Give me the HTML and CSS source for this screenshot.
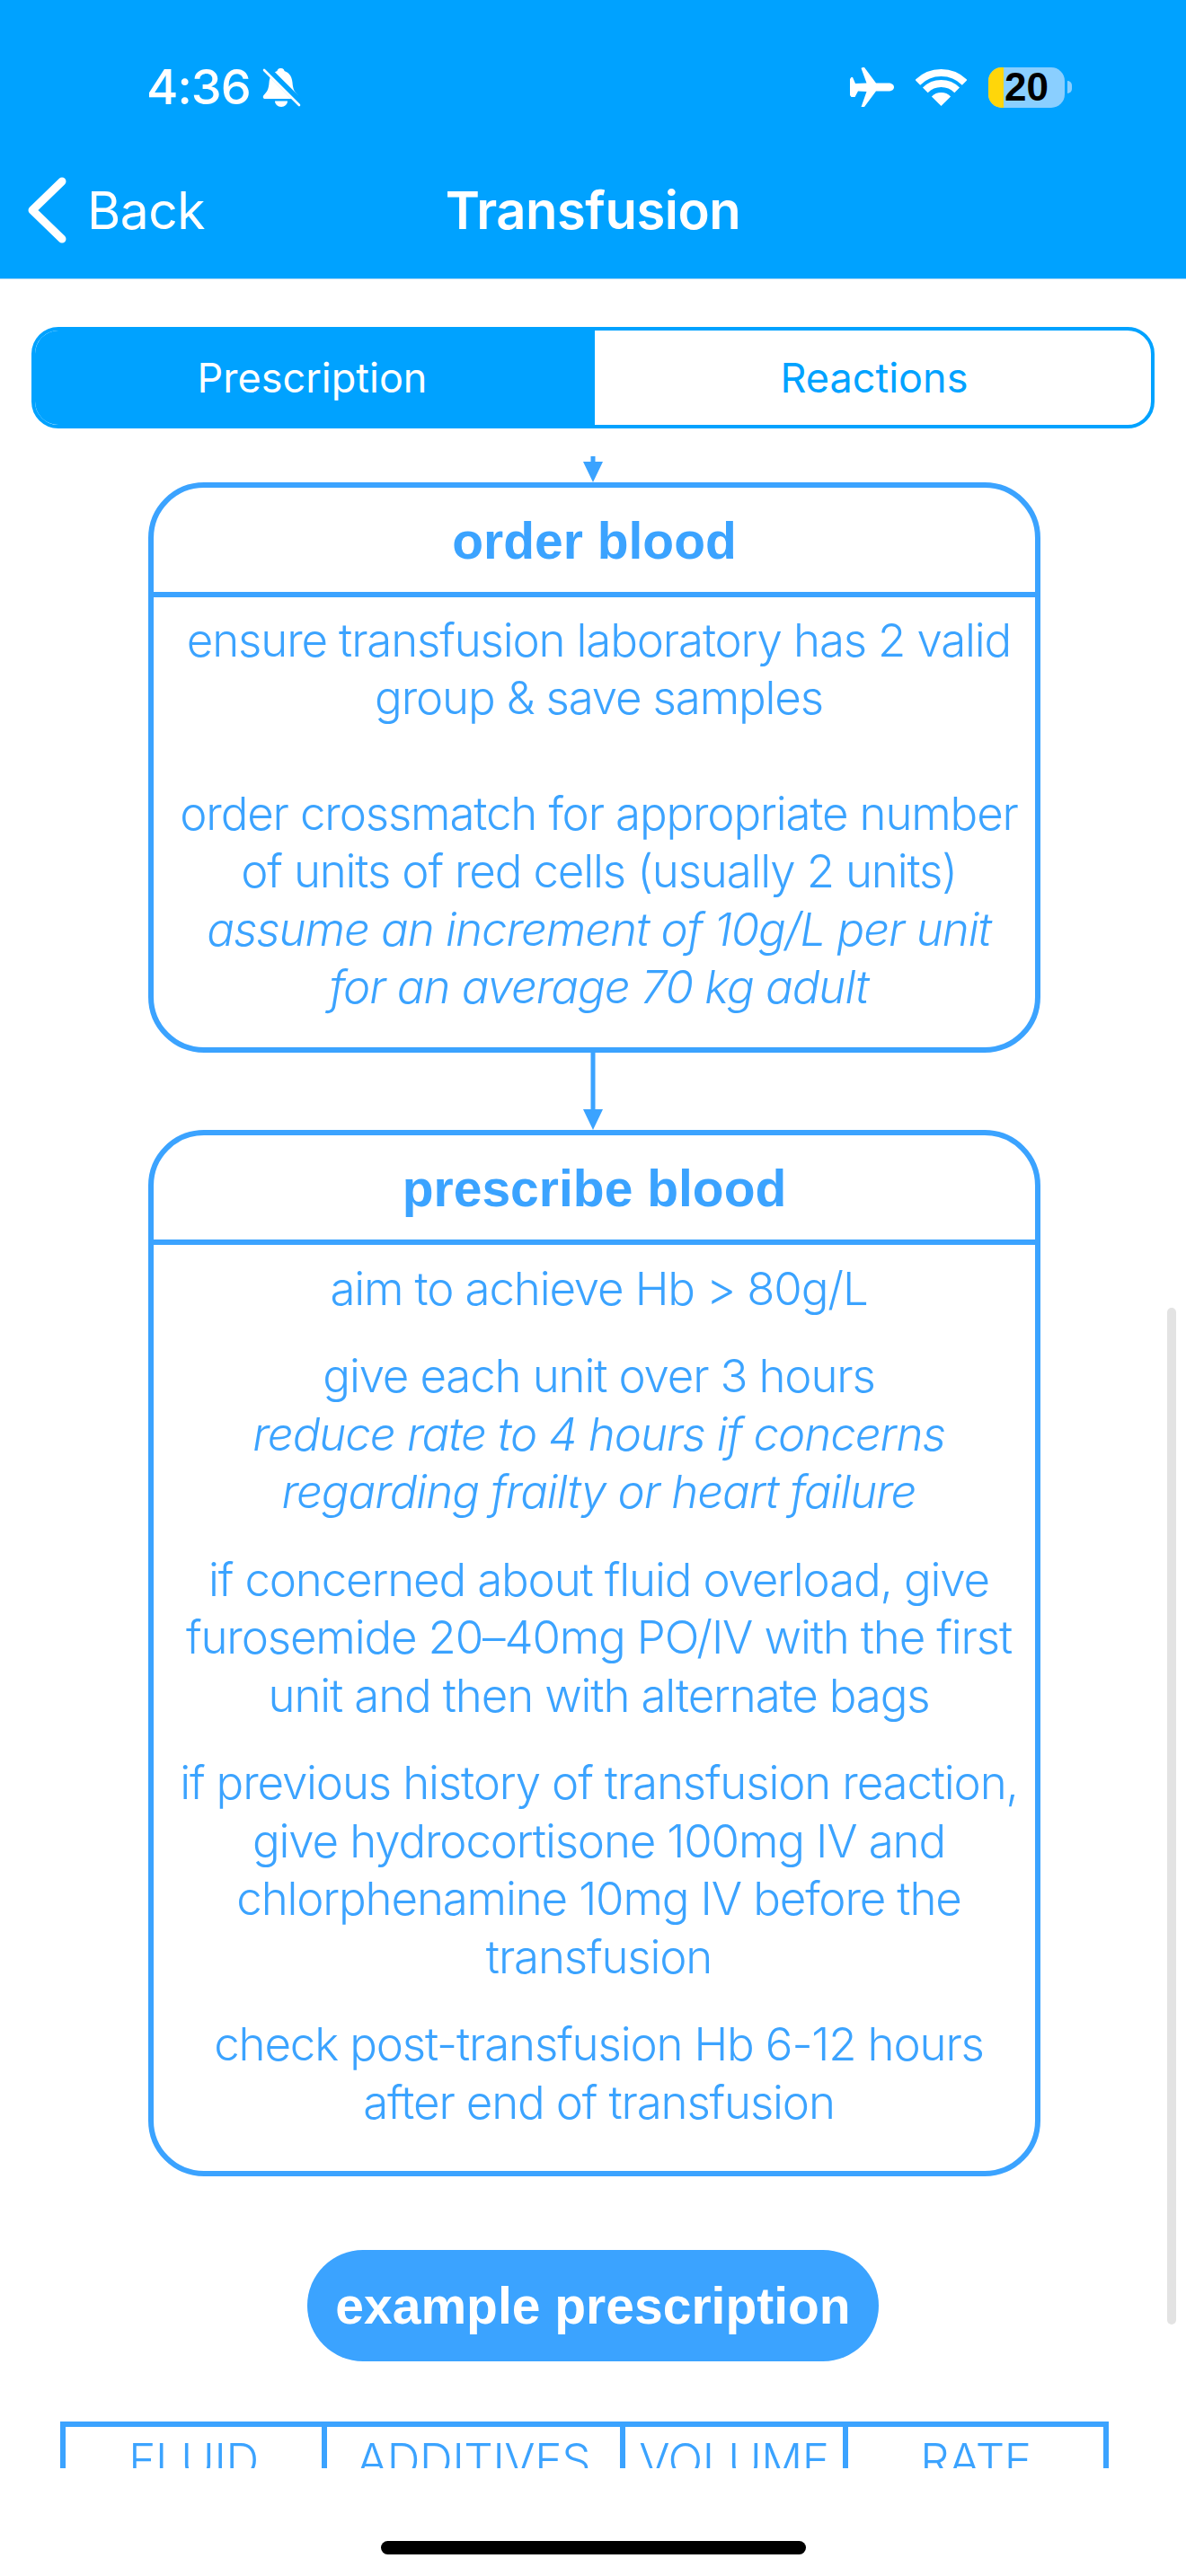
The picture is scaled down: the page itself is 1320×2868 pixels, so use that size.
FILE: index.html
```html
<html>
    <head>
        <title>Transfusion</title>
        <link rel="stylesheet" href="styles.css">
    </head>
    <body>
        <div id="header">
            <div class="status">
                <div class="status-left">
                    <span class="time">4:36</span>
                    <svg class="bell" width="43" height="44" viewBox="0 0 43 44">
                        <path fill="#fff" d="M21 1c2 0 3.5 1.5 3.5 3 6 2 8.5 7 9 13 .5 7 2 10 6 14 1.500 2 .5 4-1.500 4H3c-2 0-3-2-1.500-4 4-4 5.500-7 6-14 .5-6 3-11 9-13 0-1.500 1.500-3 3.500-3z"/>
                        <path fill="#fff" d="M14 37.500h14c0 3.500-3 6.500-7 6.500s-7-3-7-6.500z"/>
                        <path stroke="#00a2ff" stroke-width="8" d="M4 1l39 39"/>
                        <path stroke="#fff" stroke-width="2.600" stroke-linecap="round" d="M2 3l39 39"/>
                    </svg>
                </div>
                <div class="status-right">
                    <svg width="49" height="44" viewBox="0 0 49 44">
                        <path fill="#fff" d="M49 22c0 3-3 4.500-6 4.500H29L16 44h-3.500l6-17-9.500-.5L5.500 33h-4L0 31V13l1.500-2H3l3 7 12.500-.5-6-16.500Q13 0 15 0h1l13 17.500h14c3 0 6 1.500 6 4.500z"/>
                    </svg>
                    <svg width="57" height="41" viewBox="0 0 57 41">
                        <path fill="none" stroke="#fff" stroke-width="8" d="M2.340 14.840a37 37 0 0 1 52.320 0"/>
                        <path fill="none" stroke="#fff" stroke-width="8" d="M10.820 23.320a25 25 0 0 1 35.360 0"/>
                        <path fill="#fff" d="M28.500 41L17.900 30.400a15 15 0 0 1 21.200 0z"/>
                    </svg>
                    <div class="battery-wrap">
                        <div class="battery">
                            <div class="battery-level"></div>
                            <span class="battery-text">20</span>
                        </div>
                        <div class="battery-tip"></div>
                    </div>
                </div>
            </div>
            <div class="nav">
                <div class="back">
                    <svg width="43" height="74" viewBox="0 0 43 74">
                        <path fill="none" stroke="#fff" stroke-width="9" stroke-linecap="round" stroke-linejoin="round" d="M38 5L5 37l33 32"/>
                    </svg>
                    <span>Back</span>
                </div>
                <div class="nav-title">Transfusion</div>
            </div>
        </div>

        <div id="content">
            <div class="tabs">
                <div class="tab active">Prescription</div>
                <div class="tab">Reactions</div>
            </div>

            <svg class="arrow-top" width="24" height="29" viewBox="0 0 24 29">
                <path fill="#3ba3ff" d="M9.500 0h5v6H23L12 29 1 6h8.500z"/>
            </svg>

            <div class="box">
                <div class="box-title">order blood</div>
                <div class="box-body first">
                    <p>ensure transfusion laboratory has 2 valid<br>group &amp; save samples</p>
                    <p>order crossmatch for appropriate number<br>of units of red cells (usually 2 units)<br><em>assume an increment of 10g/L per unit<br>for an average 70 kg adult</em></p>
                </div>
            </div>

            <svg class="arrow" width="24" height="86" viewBox="0 0 24 86">
                <path fill="#3ba3ff" d="M9.500 0h5v63H23L12 86 1 63h8.500z"/>
            </svg>

            <div class="box">
                <div class="box-title">prescribe blood</div>
                <div class="box-body">
                    <p>aim to achieve Hb &gt; 80g/L</p>
                    <p>give each unit over 3 hours<br><em>reduce rate to 4 hours if concerns<br>regarding frailty or heart failure</em></p>
                    <p>if concerned about fluid overload, give<br>furosemide 20–40mg PO/IV with the first<br>unit and then with alternate bags</p>
                    <p>if previous history of transfusion reaction,<br>give hydrocortisone 100mg IV and<br>chlorphenamine 10mg IV before the<br>transfusion</p>
                    <p>check post-transfusion Hb 6-12 hours<br>after end of transfusion</p>
                </div>
            </div>

            <div class="pill">example prescription</div>

            <table class="fluids">
                <tr>
                    <th class="col-fluid">FLUID</th>
                    <th class="col-additives">ADDITIVES</th>
                    <th class="col-volume">VOLUME</th>
                    <th class="col-rate">RATE</th>
                </tr>
            </table>

            <div class="scrollbar"></div>
        </div>

        <div id="home"><div class="home-bar"></div></div>
    </body>
</html>
```

FILE: styles.css
```css
body{
    margin: 0;
    background: #FFF;
    font-family: "Inter", "Liberation Sans", sans-serif;
}
*{
    box-sizing: border-box;
}

#header{
    height: 311px;
    background: #00a2ff;
    color: #FFF;
    padding-top: 74px;
    border-bottom: 1px solid #b5dcf5;
}
.status{
    display: flex;
    justify-content: space-between;
    align-items: center;
    height: 46px;
    padding: 0 127px 0 163px;
}
.status-left, .status-right{
    display: flex;
    align-items: center;
}
.status-left{
    gap: 13px;
}
.status-right{
    gap: 24px;
}
.time{
    font-size: 54px;
    font-weight: 500;
    letter-spacing: -1px;
    line-height: 46px;
}
.battery-wrap{
    display: flex;
    align-items: center;
    gap: 3px;
}
.battery{
    display: flex;
    align-items: center;
    width: 85px;
    height: 45px;
    border-radius: 15px;
    background: #8acfff;
}
.battery-level{
    width: 17px;
    height: 100%;
    border-radius: 15px 0 0 15px;
    background: #ffd60a;
}
.battery-text{
    margin-left: 1px;
    color: #000;
    font-family: "Liberation Sans", sans-serif;
    font-size: 44px;
    font-weight: bold;
    line-height: 50px;
}
.battery-tip{
    width: 5px;
    height: 14px;
    border-radius: 0 5px 5px 0;
    background: #8acfff;
}

.nav{
    position: relative;
    display: flex;
    align-items: center;
    justify-content: center;
    height: 112px;
    margin-top: 58px;
}
.back{
    position: absolute;
    left: 31px;
    top: 19px;
    display: flex;
    align-items: center;
    gap: 23px;
    font-size: 57px;
    font-weight: 400;
    letter-spacing: -.5px;
}
.nav-title{
    font-size: 58px;
    font-weight: 600;
    letter-spacing: -.5px;
}

#content{
    position: relative;
    height: 2437px;
    overflow: hidden;
    display: flex;
    flex-direction: column;
    align-items: center;
}
.tabs{
    display: flex;
    flex: none;
    width: 1250px;
    height: 113px;
    margin-top: 53px;
    border: 4px solid #00a2ff;
    border-radius: 30px;
    overflow: hidden;
}
.tab{
    flex: 1;
    display: flex;
    align-items: center;
    justify-content: center;
    padding-left: 3px;
    color: #00a2ff;
    font-size: 45px;
    font-weight: 400;
}
.tab.active{
    flex: none;
    width: 623px;
    padding: 0 6px 0 0;
    background: #00a2ff;
    color: #FFF;
}
.arrow-top{
    flex: none;
    margin-top: 31px;
}
.arrow{
    flex: none;
}

.box{
    flex: none;
    width: 993px;
    margin-left: 3px;
    border: 6px solid #3ba3ff;
    border-radius: 62px;
    color: #3ba3ff;
}
.box-title{
    display: flex;
    align-items: center;
    justify-content: center;
    height: 121.500px;
    padding-top: 3px;
    border-bottom: 6px solid #3ba3ff;
    font-family: "Liberation Sans", sans-serif;
    font-size: 57px;
    font-weight: bold;
}
.box-body{
    padding: 17px 0 44px 10px;
    text-align: center;
    font-size: 51px;
    font-weight: 300;
    line-height: 64.500px;
    letter-spacing: -1.15px;
}
.box-body em{
    letter-spacing: -1.05px;
}
.box-body p{
    margin: 0 0 33px;
}
.box-body p:last-child{
    margin-bottom: 0;
}
.box-body.first{
    padding: 16px 0 34.500px 10px;
}
.box-body.first p{
    margin-bottom: 64px;
}
.box-body.first p:last-child{
    margin-bottom: 0;
}

.pill{
    flex: none;
    display: flex;
    align-items: center;
    justify-content: center;
    width: 636px;
    height: 124px;
    margin-top: 82px;
    border-radius: 62px;
    background: #3ba3ff;
    color: #FFF;
    font-family: "Liberation Sans", sans-serif;
    font-size: 57px;
    font-weight: bold;
}

.fluids{
    flex: none;
    width: 1161px;
    margin-top: 67px;
    margin-right: 19px;
    border-collapse: collapse;
    table-layout: fixed;
    color: #3ba3ff;
}
.fluids th{
    height: 100px;
    padding: 5px 0 0;
    border: 6px solid #3ba3ff;
    font-size: 51px;
    font-weight: 300;
    letter-spacing: -.4px;
    line-height: 64.500px;
    text-align: center;
    vertical-align: top;
}
.col-fluid{
    width: 291px;
}
.col-additives{
    width: 332px;
}
.col-volume{
    width: 248px;
}
.col-rate{
    width: 290px;
}

.scrollbar{
    position: absolute;
    top: 1145px;
    right: 11px;
    width: 10px;
    height: 1132px;
    border-radius: 5px;
    background: #e3e3e3;
}

#home{
    height: 120px;
    padding-top: 81px;
}
.home-bar{
    width: 473px;
    height: 15px;
    margin: 0 auto;
    border-radius: 8px;
    background: #000;
}
```
